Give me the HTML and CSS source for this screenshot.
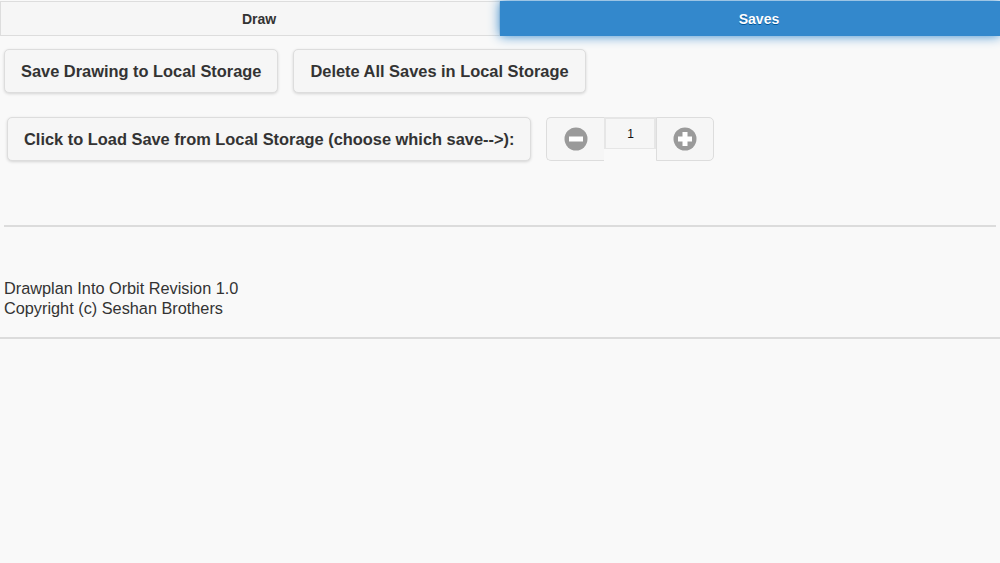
FILE: index.html
```html
<!DOCTYPE html>
<html>
<head>
<meta charset="utf-8">
<link rel="stylesheet" href="styles.css">
</head>
<body>
<div class="navbar">
  <div class="tab">Draw</div>
  <div class="tab active">Saves</div>
</div>
<div class="content">
  <div class="row row1">
    <button class="btn">Save Drawing to Local Storage</button>
    <button class="btn">Delete All Saves in Local Storage</button>
  </div>
  <div class="row row2">
    <button class="btn load">Click to Load Save from Local Storage (choose which save--&gt;):</button>
    <div class="stepper">
      <div class="step minus">
        <svg width="24" height="24" viewBox="0 0 24 24"><circle cx="12" cy="12" r="11.5" fill="#9a9a9a"/><rect x="5" y="9.5" width="14" height="5" fill="#fff"/></svg>
      </div>
      <div class="num">1</div>
      <div class="step plus">
        <svg width="24" height="24" viewBox="0 0 24 24"><circle cx="12" cy="12" r="11.5" fill="#9a9a9a"/><rect x="5" y="9.5" width="14" height="5" fill="#fff"/><rect x="9.5" y="5" width="5" height="14" fill="#fff"/></svg>
      </div>
    </div>
  </div>
  <hr class="sep">
  <div class="footer-text">
    <div>Drawplan Into Orbit Revision 1.0</div>
    <div>Copyright (c) Seshan Brothers</div>
  </div>
</div>
<div class="bottom-line"></div>
</body>
</html>
```
FILE: styles.css
```css
html, body {
  margin: 0;
  padding: 0;
  background: #f9f9f9;
  font-family: "Liberation Sans", Arial, sans-serif;
  color: #333;
}
.navbar {
  display: flex;
  margin-top: 1px;
  height: 35px;
}
.tab {
  flex: 1;
  display: flex;
  align-items: center;
  justify-content: center;
  padding-left: 18px;
  font-size: 14px;
  font-weight: bold;
  background: #f6f6f6;
  border: 1px solid #dddddd;
  color: #333;
  box-sizing: border-box;
}
.tab.active {
  background: #3388cc;
  border-color: #3388cc;
  color: #fff;
  text-shadow: 0 1px 0 #005599;
  box-shadow: 0 0 12px #3388cc;
  position: relative;
}
.content {
  padding: 0 4px;
}
.row {
  display: flex;
  align-items: flex-start;
}
.row1 {
  margin-top: 13px;
  gap: 15px;
}
.row2 {
  margin-top: 24px;
  padding-left: 3px;
  gap: 15px;
}
.btn {
  height: 44px;
  padding: 0 16px;
  font-family: "Liberation Sans", Arial, sans-serif;
  font-size: 16.4px;
  font-weight: bold;
  color: #333;
  background: #f6f6f6;
  border: 1px solid #dddddd;
  border-radius: 5px;
  box-shadow: 0 1px 3px rgba(0,0,0,0.15);
  text-shadow: 0 1px 0 #f3f3f3;
}
.stepper {
  display: flex;
  height: 44px;
}
.step {
  width: 58px;
  height: 44px;
  box-sizing: border-box;
  display: flex;
  align-items: center;
  justify-content: center;
  background: #f6f6f6;
  border: 1px solid #dddddd;
}
.minus {
  border-radius: 5px 0 0 5px;
  border-right: none;
}
.plus {
  border-radius: 0 5px 5px 0;
  border-left: 1px solid #dddddd;
}
.num {
  width: 52px;
  height: 32px;
  box-sizing: border-box;
  border: 2px solid #e6e6e6;
  border-bottom-width: 1px;
  background: #f6f6f6;
  font-size: 12px;
  display: flex;
  justify-content: center;
  padding-top: 8px;
  color: #111;
}
.sep {
  margin: 64px 0 0 0;
  border: none;
  border-top: 2px solid #dcdcdc;
  height: 0;
}
.footer-text {
  margin-top: 51px;
  font-size: 16.3px;
  line-height: 20px;
  color: #333;
}
.bottom-line {
  margin-top: 19px;
  border-top: 2px solid #dcdcdc;
}
```
